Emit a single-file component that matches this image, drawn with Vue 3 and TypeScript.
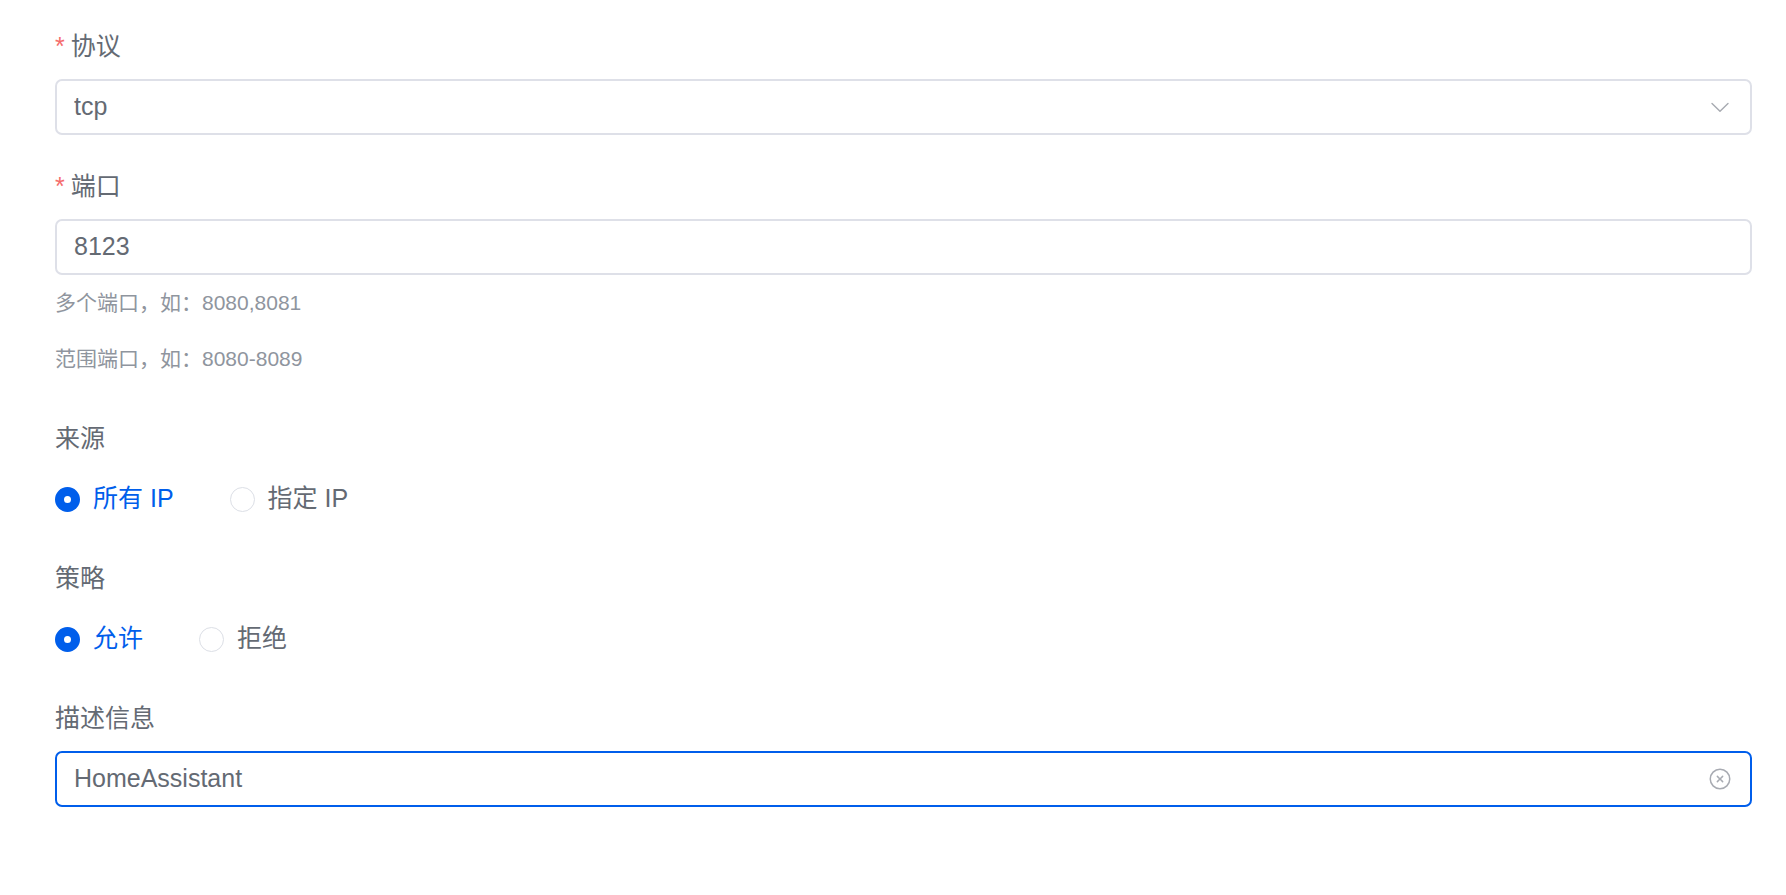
<script setup lang="ts">
import { ref } from 'vue'

interface Option {
  value: string
  label: string
}

const protocols: string[] = ['tcp', 'udp', 'tcp/udp']
const sources: Option[] = [
  { value: 'anyWhere', label: '所有 IP' },
  { value: 'address', label: '指定 IP' },
]
const strategies: Option[] = [
  { value: 'accept', label: '允许' },
  { value: 'drop', label: '拒绝' },
]
const portHints: string[] = ['多个端口，如：8080,8081', '范围端口，如：8080-8089']

const protocol = ref('tcp')
const port = ref('8123')
const source = ref('anyWhere')
const strategy = ref('accept')
const description = ref('HomeAssistant')
</script>

<template>
  <form class="form" @submit.prevent>
    <div class="item">
      <label class="label required" for="protocol">协议</label>
      <div class="field">
        <select id="protocol" v-model="protocol" class="control">
          <option v-for="p in protocols" :key="p" :value="p">{{ p }}</option>
        </select>
        <svg class="icon arrow" viewBox="0 0 1024 1024" aria-hidden="true">
          <path
            d="M831.872 340.864 512 652.672 192.128 340.864a30.592 30.592 0 0 0-42.752 0 29.12 29.12 0 0 0 0 41.6L489.664 714.24a32 32 0 0 0 44.672 0l340.288-331.712a29.12 29.12 0 0 0 0-41.728 30.592 30.592 0 0 0-42.752 0z"
          />
        </svg>
      </div>
    </div>

    <div class="item">
      <label class="label required" for="port">端口</label>
      <div class="field">
        <input id="port" v-model="port" class="control" type="text" />
      </div>
      <p v-for="hint in portHints" :key="hint" class="hint">{{ hint }}</p>
    </div>

    <fieldset class="item">
      <legend class="label">来源</legend>
      <div class="radios">
        <label v-for="o in sources" :key="o.value" class="radio">
          <input v-model="source" class="dot" type="radio" name="source" :value="o.value" />
          <span class="radio-text">{{ o.label }}</span>
        </label>
      </div>
    </fieldset>

    <fieldset class="item">
      <legend class="label">策略</legend>
      <div class="radios">
        <label v-for="o in strategies" :key="o.value" class="radio">
          <input v-model="strategy" class="dot" type="radio" name="strategy" :value="o.value" />
          <span class="radio-text">{{ o.label }}</span>
        </label>
      </div>
    </fieldset>

    <div class="item">
      <label class="label" for="description">描述信息</label>
      <div class="field">
        <input id="description" v-model="description" class="control active" type="text" />
        <button class="clear" type="button" aria-label="清空" @click="description = ''">
          <svg class="icon" viewBox="0 0 1024 1024" aria-hidden="true">
            <path
              d="m466.752 512-90.496-90.496a32 32 0 0 1 45.248-45.248L512 466.752l90.496-90.496a32 32 0 0 1 45.248 45.248L557.248 512l90.496 90.496a32 32 0 1 1-45.248 45.248L512 557.248l-90.496 90.496a32 32 0 0 1-45.248-45.248L466.752 512z"
            />
            <path
              d="M512 896a384 384 0 1 0 0-768 384 384 0 0 0 0 768zm0 64a448 448 0 1 1 0-896 448 448 0 0 1 0 896z"
            />
          </svg>
        </button>
      </div>
    </div>
  </form>
</template>

<style>
body {
  background: #fff;
}
</style>

<style scoped>
.form {
  display: flex;
  flex-direction: column;
  gap: 32px;
  padding: 27px 34px 32px 55px;
  color: #646a73;
  font-family: 'Liberation Sans', 'Noto Sans CJK SC', sans-serif;
  font-size: 25px;
}

.item {
  min-width: 0;
  margin: 0;
  padding: 0;
  border: 0;
}

.label {
  display: block;
  height: 38px;
  margin-bottom: 14px;
  padding: 0;
  line-height: 38px;
}

.required::before {
  content: '*';
  margin-right: 6px;
  color: #f56c6c;
}

.field {
  position: relative;
}

.control {
  display: block;
  box-sizing: border-box;
  width: 100%;
  height: 56px;
  margin: 0;
  padding: 0 60px 2px 17px;
  border: 2px solid #dee0e8;
  border-radius: 7px;
  outline: none;
  background: #fff;
  color: #646a73;
  font: inherit;
  line-height: 28px;
  appearance: none;
}

.control.active,
.control:focus {
  border-color: #005eeb;
}

.icon {
  display: block;
  width: 24px;
  height: 24px;
  fill: #a8abb2;
}

.arrow,
.clear {
  position: absolute;
  top: 16px;
  right: 20px;
}

.arrow {
  pointer-events: none;
}

.clear {
  padding: 0;
  border: 0;
  background: none;
  cursor: pointer;
}

.hint {
  margin: 0;
  color: #8f959e;
  font-size: 21px;
  line-height: 56px;
}

.radios {
  display: flex;
  gap: 56px;
}

.radio {
  display: flex;
  align-items: center;
  gap: 13px;
  height: 56px;
  cursor: pointer;
}

.radio-text {
  padding-bottom: 2px;
  line-height: 28px;
}

.dot {
  flex: none;
  box-sizing: border-box;
  width: 25px;
  height: 25px;
  margin: 0;
  border: 1px solid #dcdfe6;
  border-radius: 50%;
  background: #fff;
  appearance: none;
}

.dot:checked {
  border: 9px solid #005eeb;
}

.dot:checked + .radio-text {
  color: #005eeb;
}
</style>
